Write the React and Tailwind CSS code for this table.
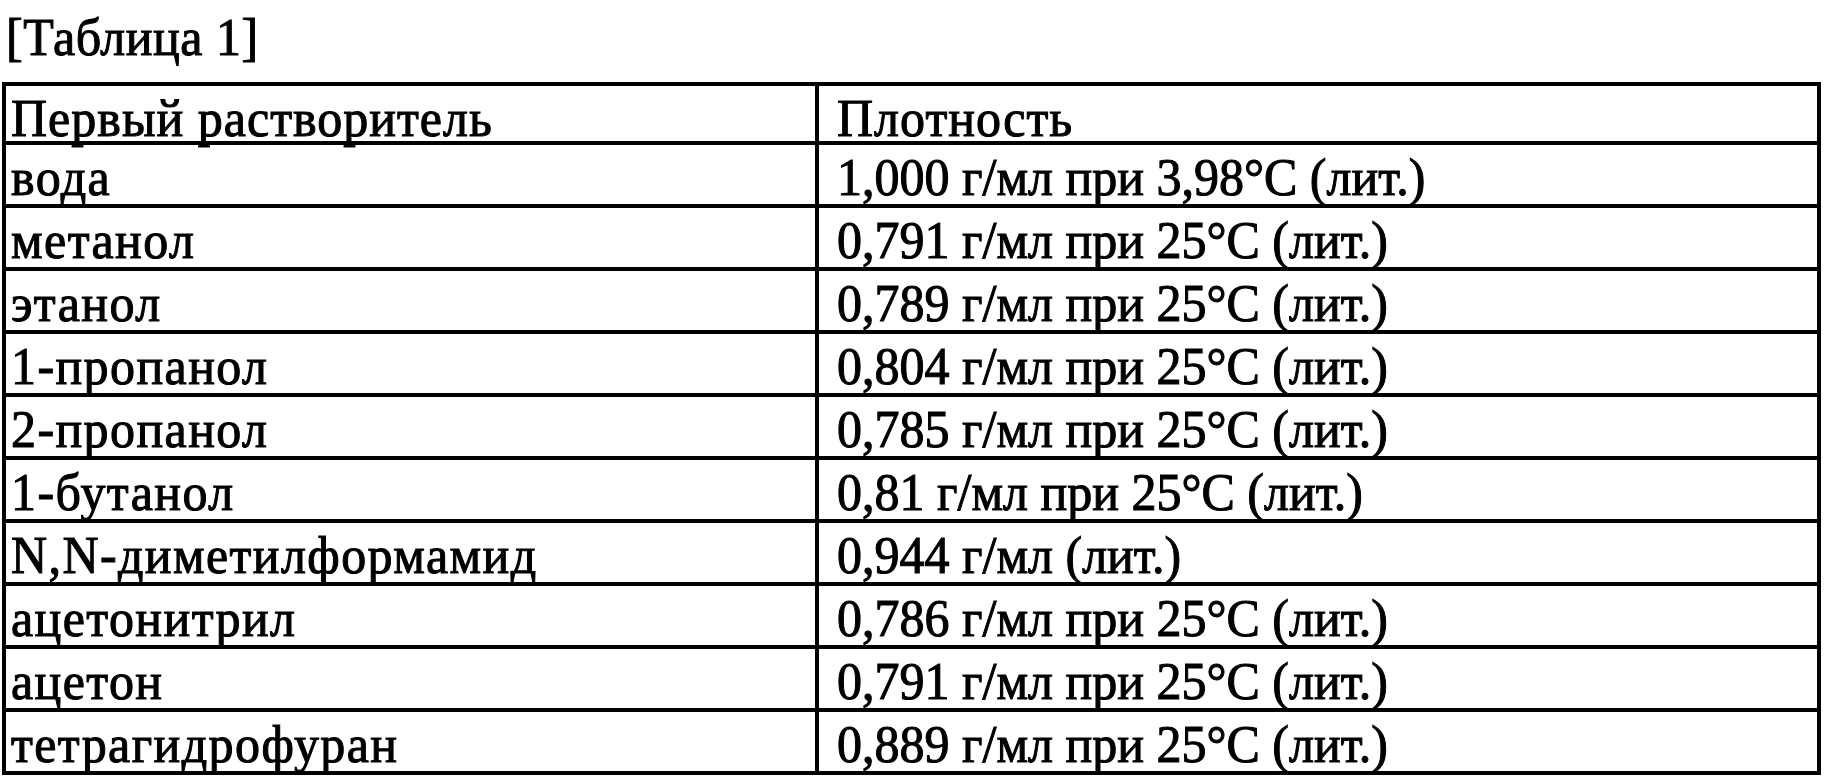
const rows = [
  ["вода", "1,000 г/мл при 3,98°C (лит.)"],
  ["метанол", "0,791 г/мл при 25°C (лит.)"],
  ["этанол", "0,789 г/мл при 25°C (лит.)"],
  ["1-пропанол", "0,804 г/мл при 25°C (лит.)"],
  ["2-пропанол", "0,785 г/мл при 25°C (лит.)"],
  ["1-бутанол", "0,81 г/мл при 25°C (лит.)"],
  ["N,N-диметилформамид", "0,944 г/мл (лит.)"],
  ["ацетонитрил", "0,786 г/мл при 25°C (лит.)"],
  ["ацетон", "0,791 г/мл при 25°C (лит.)"],
  ["тетрагидрофуран", "0,889 г/мл при 25°C (лит.)"],
];

// scanned type is slightly taller than it is wide, and inked heavier
function Text({ children, className = "" }) {
  return (
    <span
      className={`inline-block origin-bottom scale-y-[1.07] leading-none whitespace-nowrap [-webkit-text-stroke:1px_black] ${className}`}
    >
      {children}
    </span>
  );
}

export default function App() {
  return (
    <div className="w-[1825px] h-[777px] bg-white text-black font-['Liberation_Serif','Times_New_Roman',serif] text-[50px] leading-none overflow-hidden">
      {/* Title */}
      <div className="h-[82px] pl-[6px] pt-[14px]">
        <Text className="tracking-[0.5px]">[Таблица 1]</Text>
      </div>

      <table className="ml-[2px] w-[1819px] border-collapse table-fixed leading-none">
        <colgroup>
          <col className="w-[813px]" />
          <col />
        </colgroup>
        <thead>
          <tr className="h-[59px]">
            <th className="border-[4px] border-black pl-[5px] align-bottom font-normal text-left leading-none">
              <Text className="translate-y-[4px] tracking-[1px]">Первый растворитель</Text>
            </th>
            <th className="border-[4px] border-black pl-[18px] align-bottom font-normal text-left leading-none">
              <Text className="translate-y-[4px] tracking-[1px]">Плотность</Text>
            </th>
          </tr>
        </thead>
        <tbody>
          {rows.map(([name, density]) => (
            <tr key={name} className="h-[63px]">
              <td className="border-[4px] border-black pl-[5px] align-bottom leading-none">
                <Text className="tracking-[1.4px]">{name}</Text>
              </td>
              <td className="border-[4px] border-black pl-[18px] align-bottom leading-none">
                <Text>{density}</Text>
              </td>
            </tr>
          ))}
        </tbody>
      </table>
    </div>
  );
}
